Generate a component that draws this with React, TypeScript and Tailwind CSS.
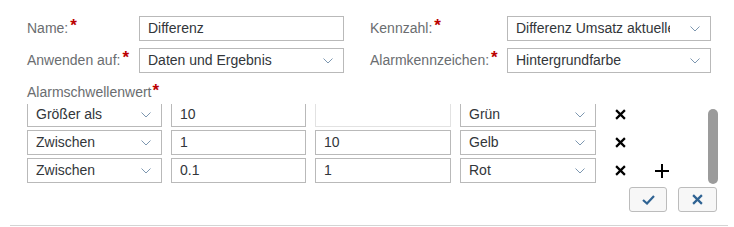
import React from "react";

const FONT = { fontFamily: '"Liberation Sans", Arial, sans-serif' };

function Chevron() {
  return (
    <svg width="10" height="6" viewBox="0 0 10 6" className="shrink-0">
      <path d="M0.5 0.5 L5 5 L9.5 0.5" fill="none" stroke="#7d97b0" strokeWidth="1" />
    </svg>
  );
}

function Cross({ size = 11, color = "#000", width = 2 }: { size?: number; color?: string; width?: number }) {
  return (
    <svg width={size} height={size} viewBox="0 0 10 10">
      <path d="M1 1 L9 9 M9 1 L1 9" stroke={color} strokeWidth={width} fill="none" />
    </svg>
  );
}

function Star() {
  return <span className="text-[#bb0000] ml-[2px] -mt-[7px] text-[17px] font-bold leading-none">*</span>;
}

function Label({ text, w }: { text: string; w: string }) {
  return (
    <div className={`${w} shrink-0 text-[14px] text-[#6a6d70] flex items-center`}>
      {text}
      <Star />
    </div>
  );
}

function Field({ value, select, w, disabled }: { value: string; select?: boolean; w: string; disabled?: boolean }) {
  return (
    <div
      className={`${w} h-[25px] shrink-0 border ${disabled ? "border-[#e2e2e2]" : "border-[#b9b9b9]"} bg-white flex items-center pl-[8px] pr-[10px] text-[14px] text-[#32363a] overflow-hidden`}
    >
      <span className="flex-1 whitespace-nowrap overflow-hidden">{value}</span>
      {select && (
        <span className="ml-[20px] flex">
          <Chevron />
        </span>
      )}
    </div>
  );
}

const rows = [
  { op: "Größer als", a: "10", b: "", color: "Grün", disabled: true },
  { op: "Zwischen", a: "1", b: "10", color: "Gelb" },
  { op: "Zwischen", a: "0.1", b: "1", color: "Rot", plus: true },
];

export default function App() {
  return (
    <div className="w-[734px] h-[227px] bg-white relative overflow-hidden" style={FONT}>
      <div className="pt-[16px] pl-[27px] flex flex-col gap-[7px]">
        <div className="flex items-center">
          <Label text="Name:" w="w-[112px]" />
          <Field value="Differenz" w="w-[205px]" />
          <div className="w-[26px]" />
          <Label text="Kennzahl:" w="w-[137px]" />
          <Field value="Differenz Umsatz aktuelle" select w="w-[204px]" />
        </div>
        <div className="flex items-center">
          <Label text="Anwenden auf:" w="w-[112px]" />
          <Field value="Daten und Ergebnis" select w="w-[205px]" />
          <div className="w-[26px]" />
          <Label text="Alarmkennzeichen:" w="w-[137px]" />
          <Field value="Hintergrundfarbe" select w="w-[204px]" />
        </div>
      </div>

      <div className="pl-[27px] mt-[9px] h-[22px] flex items-start text-[14px] text-[#6a6d70]">
        Alarmschwellenwert
        <span className="text-[#bb0000] ml-[1px] mt-[0px] text-[17px] font-bold leading-none">*</span>
      </div>

      <div className="relative ml-[27px] w-[694px] h-[80px] overflow-hidden">
        <div className="-mt-[2px] flex flex-col gap-[3px]">
          {rows.map((r, i) => (
            <div key={i} className="flex items-center">
              <Field value={r.op} select w="w-[135px]" />
              <div className="w-[9px]" />
              <Field value={r.a} w="w-[135px]" />
              <div className="w-[9px]" />
              <Field value={r.b} w="w-[136px]" disabled={r.disabled} />
              <div className="w-[9px]" />
              <Field value={r.color} select w="w-[136px]" />
              <div className="w-[18px]" />
              <div className="w-[12px] flex justify-center">
                <Cross size={11} />
              </div>
              {r.plus && (
                <div className="ml-[29px] w-[14px] flex justify-center">
                  <svg width="14" height="14" viewBox="0 0 14 14">
                    <path d="M7 0 V14 M0 7 H14" stroke="#000" strokeWidth="2" />
                  </svg>
                </div>
              )}
            </div>
          ))}
        </div>
        <div className="absolute left-[681px] top-[5px] w-[10px] h-[75px] rounded-[5px] bg-[#9b9b9b]" />
      </div>

      <div className="flex justify-end gap-[11px] pr-[17px] mt-[3px]">
        <button className="w-[38px] h-[25px] rounded-[3px] border border-[#bcbcbc] bg-[#f7f7f7] flex items-center justify-center">
          <svg width="13" height="10" viewBox="0 0 13 10">
            <path d="M1 5 L5 8.5 L12 1" fill="none" stroke="#2f6393" strokeWidth="2.2" />
          </svg>
        </button>
        <button className="w-[39px] h-[25px] rounded-[3px] border border-[#bcbcbc] bg-[#f7f7f7] flex items-center justify-center">
          <Cross size={11} color="#2f6393" width={2} />
        </button>
      </div>

      <div className="absolute left-[10px] top-[225px] w-[718px] h-[1px] bg-[#d4d4d4]" />
    </div>
  );
}
